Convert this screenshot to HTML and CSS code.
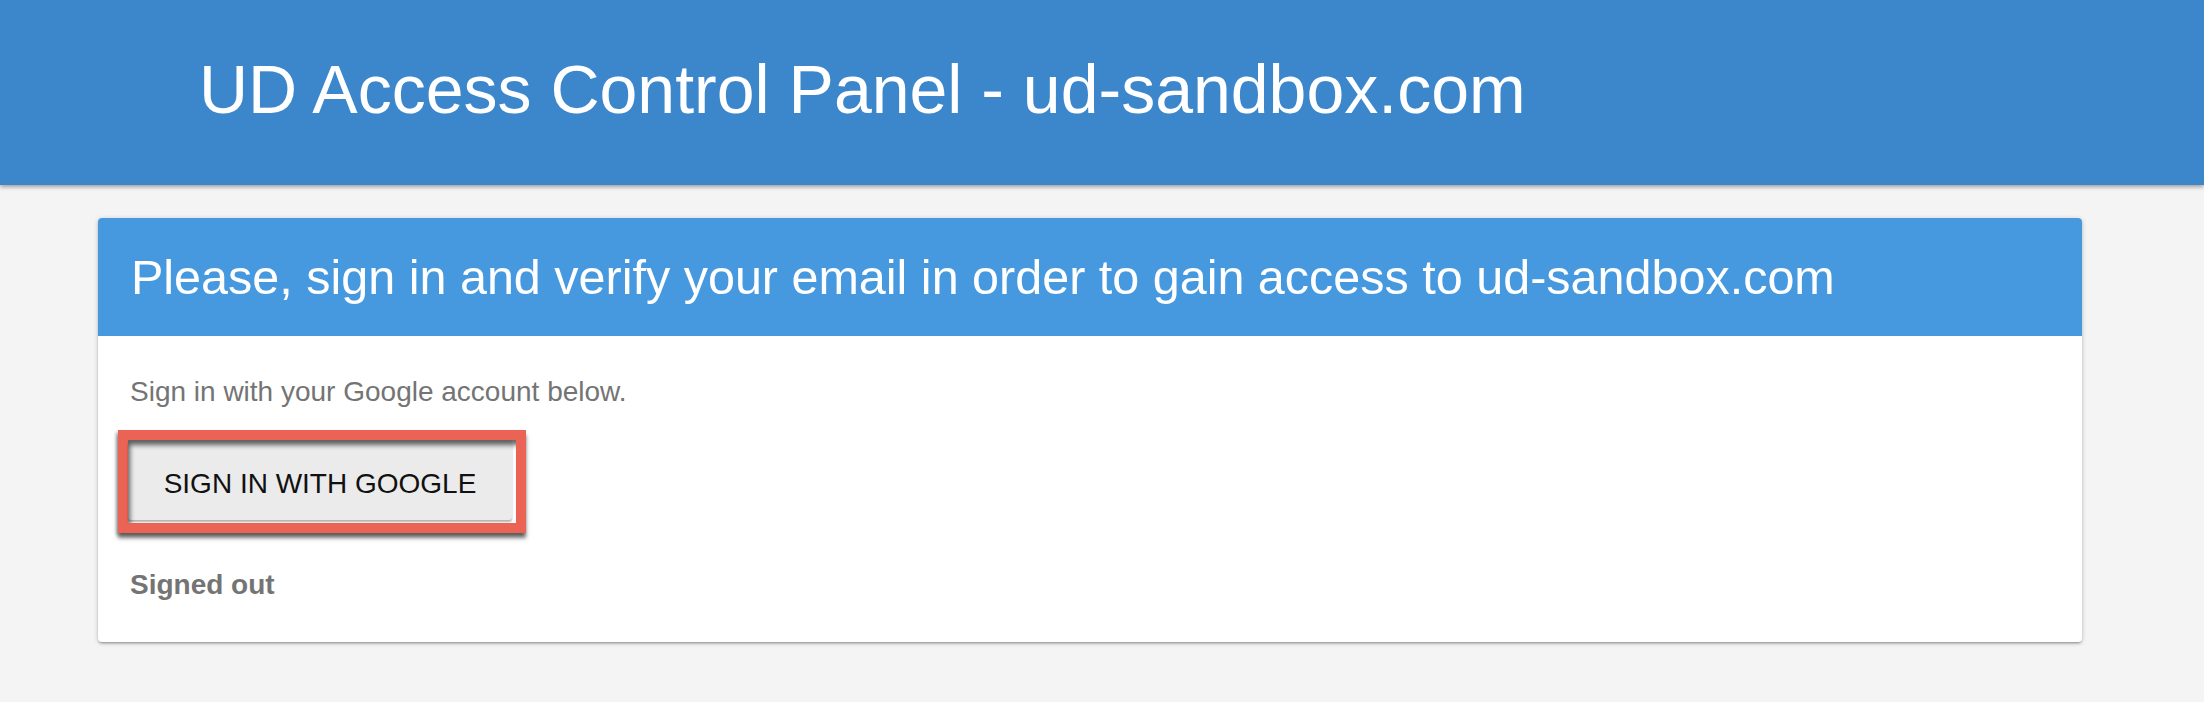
FILE: index.html
```html
<!DOCTYPE html>
<html>
<head>
<meta charset="utf-8">
<title>UD Access Control Panel</title>
<link rel="stylesheet" href="styles.css">
</head>
<body>
<header class="topbar">
  <h1 class="topbar-title">UD Access Control Panel - ud-sandbox.com</h1>
</header>
<main class="page">
  <section class="card">
    <div class="card-head">
      <h2 class="card-title">Please, sign in and verify your email in order to gain access to ud-sandbox.com</h2>
    </div>
    <div class="card-body">
      <p class="hint">Sign in with your Google account below.</p>
      <div class="annot">
        <div class="annot-inner">
          <button class="btn" type="button">SIGN IN WITH GOOGLE</button>
        </div>
      </div>
      <p class="status">Signed out</p>
    </div>
  </section>
</main>
</body>
</html>
```

FILE: styles.css
```css
* { box-sizing: border-box; }

html, body {
  margin: 0;
  padding: 0;
}

body {
  background: #f4f4f4;
  font-family: "Liberation Sans", Arial, Helvetica, sans-serif;
  width: 2204px;
  height: 702px;
  overflow: hidden;
}

.topbar {
  height: 185px;
  background: #3c87cb;
  display: flex;
  align-items: center;
  padding: 0 0 7px 199px;
  box-shadow: 0 2px 4px rgba(0, 0, 0, 0.35);
  position: relative;
  z-index: 1;
}

.topbar-title {
  margin: 0;
  font-size: 68px;
  font-weight: 400;
  color: #ffffff;
  line-height: normal;
}

.page {
  padding: 33px 0 0 98px;
}

.card {
  width: 1984px;
  background: #ffffff;
  border-radius: 4px;
  box-shadow: 0 2px 2px 0 rgba(0, 0, 0, 0.14), 0 3px 1px -2px rgba(0, 0, 0, 0.12), 0 1px 5px 0 rgba(0, 0, 0, 0.2);
}

.card-head {
  height: 118px;
  background: #4699df;
  display: flex;
  align-items: center;
  padding-left: 33px;
  border-radius: 4px 4px 0 0;
}

.card-title {
  margin: 0;
  font-size: 48.5px;
  font-weight: 400;
  color: #ffffff;
  line-height: normal;
}

.card-body {
  padding: 35px 32px 36px 32px;
}

.hint {
  margin: 0;
  font-size: 28px;
  line-height: 42px;
  color: #747474;
}

.annot {
  display: inline-block;
  margin: 17px 0 0 -12px;
  border: 10px solid #eb6354;
  box-shadow: 0 5px 4px rgba(0, 0, 0, 0.55), -2px 2px 3px rgba(0, 0, 0, 0.25);
}

.annot-inner {
  position: relative;
  background: #ffffff;
  padding: 0 4px 3px 0;
}

.annot-inner::after {
  content: "";
  position: absolute;
  inset: 0;
  box-shadow: inset 3px 6px 5px -1px rgba(0, 0, 0, 0.6);
  pointer-events: none;
}

.btn {
  display: block;
  width: 384px;
  height: 80px;
  padding: 8px 0 0 0;
  line-height: 72px;
  border: none;
  border-radius: 3px;
  background: #ebebeb;
  color: #111111;
  font-family: "Liberation Sans", Arial, Helvetica, sans-serif;
  font-size: 28px;
  letter-spacing: 0;
  text-align: center;
  box-shadow: 0 2px 2px rgba(0, 0, 0, 0.3);
}

.status {
  margin: 31px 0 0 0;
  font-size: 28px;
  line-height: 42px;
  font-weight: 700;
  color: #747474;
}
```
